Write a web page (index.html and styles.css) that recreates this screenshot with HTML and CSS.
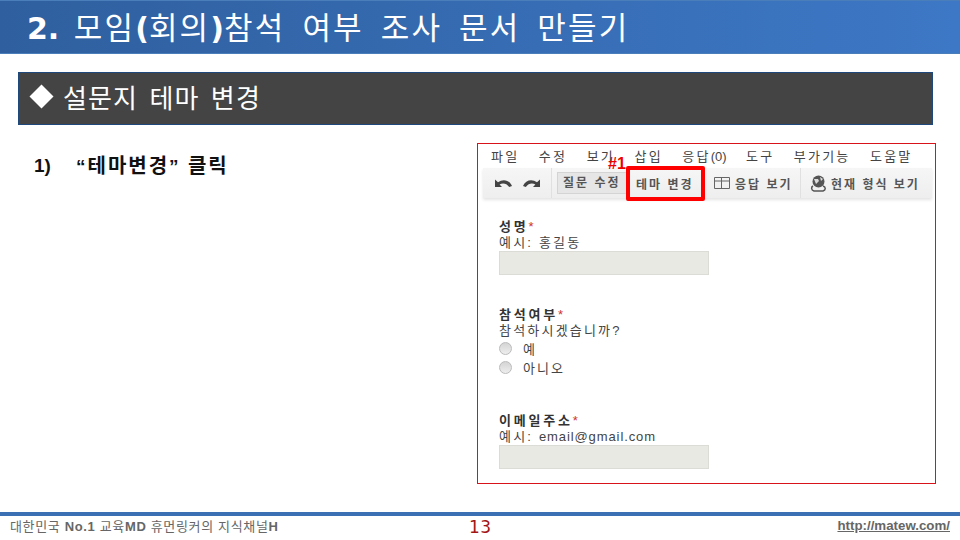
FILE: index.html
```html
<!DOCTYPE html>
<html lang="ko">
<head>
<meta charset="utf-8">
<title>모임 참석 여부 조사 문서 만들기</title>
<link rel="stylesheet" href="styles.css">
</head>
<body>
<div class="slide">
  <header class="title-bar"><h1><b class="no">2. </b>모임<b>(</b>회의<b>)</b>참석 여부 조사 문서 만들기</h1></header>
  <section class="section-bar"><span class="diamond"></span><h2>설문지 테마 변경</h2></section>
  <main class="content">
    <div class="steps"><span class="num">1)</span><span class="step-text"><span class="quote">“</span><span class="ko">테마변경</span>” <span class="ko">클릭</span></span></div>
    <div class="shot">
      <nav class="menu"><span>파일</span><span>수정</span><span>보기</span><span>삽입</span><span>응답<span class="count">(0)</span></span><span>도구</span><span>부가기능</span><span>도움말</span></nav>
      <div class="toolbar">
        <div class="tb-group undo">
          <svg width="19" height="10" viewBox="0 0 19 10"><path d="M1 1.5V9H8L5.6 6.6C8.5 4.6 12.5 5.2 15.2 9L18 8C15.5 2 9 .5 4 4.3Z" fill="#444"/></svg>
          <svg width="19" height="10" viewBox="0 0 19 10"><path d="M18 1.5V9H11L13.4 6.6C10.5 4.6 6.5 5.2 3.8 9L1 8C3.5 2 10 .5 15 4.3Z" fill="#444"/></svg>
        </div>
        <div class="tb-group edit"><span class="active">질문 수정</span></div>
        <div class="tb-group theme"><span>테마 변경</span></div>
        <div class="tb-group resp">
          <svg width="16" height="12" viewBox="0 0 16 12"><path d="M.5.5h15v11H.5zM.5 4h15M7.5 .5v11" fill="none" stroke="#666"/></svg>
          <span>응답 보기</span>
        </div>
        <div class="tb-group live">
          <svg width="17" height="17" viewBox="0 0 17 17"><circle cx="8.5" cy="6.5" r="6" fill="#555"/><path d="M4 4h4l1 2-3 3zM10 2l3 2-2 2z" fill="#ddd"/><path d="M3 11c-2 1-2 4 1 5h9c3-1 3-4 0-5" fill="none" stroke="#555" stroke-width="1.5"/></svg>
          <span>현재 형식 보기</span>
        </div>
      </div>
      <form class="form">
        <div class="field first">
          <div class="label">성명<i>*</i></div>
          <div class="hint">예시: 홍길동</div>
          <div class="input"></div>
        </div>
        <div class="field second">
          <div class="label">참석여부<i>*</i></div>
          <div class="hint">참석하시겠습니까?</div>
          <div class="radio"><span class="dot"></span>예</div>
          <div class="radio"><span class="dot"></span>아니오</div>
        </div>
        <div class="field third">
          <div class="label">이메일주소<i>*</i></div>
          <div class="hint">예시: <span class="latin">email@gmail.com</span></div>
          <div class="input"></div>
        </div>
      </form>
      <div class="highlight"></div>
      <div class="marker">#1</div>
    </div>
  </main>
  <footer class="footer">
    <div class="org">대한민국 <b>No.1</b> 교육<b>MD</b> 휴먼링커의 지식채널<b>H</b></div>
    <div class="page">13</div>
    <a class="url">http://matew.com/</a>
  </footer>
</div>
</body>
</html>
```
FILE: styles.css
```css
* { box-sizing: border-box; }
html, body { margin: 0; padding: 0; background: #fff; }
body { font-family: "Liberation Sans", "Noto Sans CJK KR", sans-serif; }
.slide { width: 960px; height: 540px; overflow: hidden; display: flex; flex-direction: column; }

.title-bar { height: 54px; padding: 0 0 0 27px; display: flex; align-items: center; background: linear-gradient(90deg, #2f5f9e, #3d78c6); border: 1px solid #4a7ebb; border-width: 1px 0; }
.title-bar h1 { margin: 0; font-family: "Noto Sans CJK KR", sans-serif; font-size: 31px; font-weight: 400; color: #fff; letter-spacing: 2.2px; word-spacing: 6px; line-height: 1; white-space: nowrap; }
.title-bar b { font-family: "DejaVu Sans", sans-serif; font-weight: 700; letter-spacing: 0; font-size: 30px; }
.title-bar .no { word-spacing: 0; white-space: pre; margin-right: 4px; }

.section-bar { margin: 18px 27px 0 18px; height: 53px; padding: 0 0 4px 11px; display: flex; align-items: center; gap: 13px; background: #444; border: 1px solid #1f497d; }
.diamond { width: 17px; height: 17px; background: #fff; transform: rotate(45deg); margin-left: 3px; }
.section-bar h2 { margin: 0; font-family: "Noto Sans CJK KR", sans-serif; font-size: 26px; font-weight: 400; color: #fff; letter-spacing: 1.1px; word-spacing: 3px; line-height: 1; }

.content { flex: 1; display: flex; justify-content: space-between; padding: 18px 24px 0 34px; }
.steps { display: flex; gap: 24px; font-size: 19px; font-weight: 700; color: #111; padding-top: 12px; line-height: 22px; }
.steps .num { width: 18px; }
.step-text { word-spacing: 4px; }
.steps .quote { margin-right: 2px; }
.steps .ko { font-size: 20px; letter-spacing: 2px; }

.shot { position: relative; width: 459px; height: 341px; border: 1px solid #d9131a; color: #444; overflow: hidden; }
.menu { height: 24px; display: flex; gap: 19.5px; padding: 5px 0 0 13px; font-size: 13px; line-height: 16px; letter-spacing: 2.2px; color: #444; white-space: nowrap; }
.menu .count { letter-spacing: 0; }
.toolbar { margin-left: 5px; margin-right: 3px; height: 30px; display: flex; align-items: center; font-size: 12px; letter-spacing: 2px; font-weight: 700; background: linear-gradient(#f6f6f6, #eeeeee); box-shadow: 0 2px 3px #e4e4e4; color: #555; }
.tb-group { height: 30px; display: flex; align-items: center; border-right: 1px solid #e0e0e0; white-space: nowrap; }
.undo { width: 69px; gap: 9px; padding-left: 11px; }
.edit { width: 73px; padding-left: 5px; border: 0; }
.edit .active { display: block; padding: 2px 5px; background: #e6e6e6; border: 1px solid #d4d4d4; border-right: 0; line-height: 16px; }
.theme { width: 77px; padding-left: 11px; border-right: 0; }
.resp { width: 99px; gap: 5px; padding-left: 12px; }
.live { gap: 4px; padding-left: 9px; border-right: 0; }
.form { padding: 0 0 0 21px; }
.field { width: 210px; }
.first { padding-top: 20px; }
.second { padding-top: 31px; }
.third { padding-top: 35px; }
.label { font-size: 13px; line-height: 17px; font-weight: 700; color: #333; letter-spacing: 2.8px; }
.label i { color: #c33; font-style: normal; font-weight: 400; }
.hint { font-size: 13px; line-height: 15px; color: #444; letter-spacing: 2.2px; white-space: nowrap; }
.second .hint { margin-bottom: 1px; }
.hint .latin { letter-spacing: .9px; }
.input { margin-top: 1px; height: 24px; background: #e9e9e3; border: 1px solid #dcdcd6; }
.radio { display: flex; align-items: center; height: 19px; font-size: 13px; letter-spacing: 2px; color: #444; }
.dot { width: 13px; height: 13px; margin-right: 11px; border-radius: 50%; background: linear-gradient(#d4d4d4, #eee); border: 1px solid #bbb; }

.highlight { position: absolute; left: 148px; top: 22px; width: 79px; height: 35px; border: 4px solid #f00; border-radius: 2px; }
.marker { position: absolute; left: 130px; top: 11px; color: #e00; font: 700 16px/18px "Liberation Sans", sans-serif; }

.footer { height: 28px; border-top: 4px solid #3b70b5; display: flex; align-items: center; justify-content: space-between; padding: 0 10px 5px; position: relative; }
.org { font-size: 13px; color: #666; letter-spacing: .65px; white-space: nowrap; }
.page { position: absolute; left: 469px; top: 0; font: 17px/22px "DejaVu Sans", sans-serif; letter-spacing: .5px; color: #a31515; }
.url { font-size: 13.3px; font-weight: 700; color: #666; text-decoration: underline; }
```
